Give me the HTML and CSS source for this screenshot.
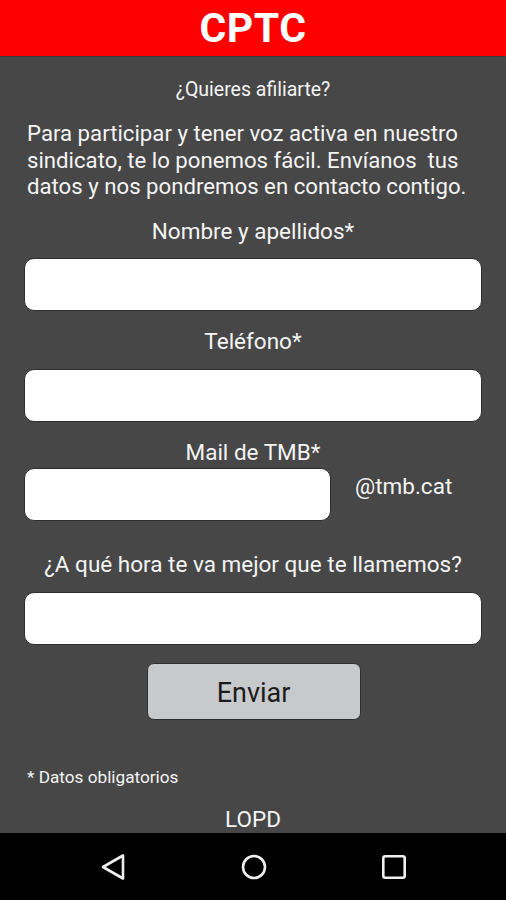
FILE: index.html
```html
<!DOCTYPE html>
<html lang="es">
<head>
<meta charset="utf-8">
<title>CPTC</title>
<link rel="stylesheet" href="styles.css">
</head>
<body>
<div class="screen">
  <header class="topbar"><h1 class="title">CPTC</h1></header>
  <main class="content">
    <p class="ask">¿Quieres afiliarte?</p>
    <p class="intro">Para participar y tener voz activa en nuestro sindicato, te lo ponemos fácil. Envíanos&nbsp; tus datos y nos pondremos en contacto contigo.</p>
    <label class="label l-name">Nombre y apellidos*</label>
    <div class="field"></div>
    <label class="label l-phone">Teléfono*</label>
    <div class="field"></div>
    <label class="label l-mail">Mail de TMB*</label>
    <div class="mail-row">
      <div class="field field-mail"></div>
      <span class="domain">@tmb.cat</span>
    </div>
    <label class="label l-hour">¿A qué hora te va mejor que te llamemos?</label>
    <div class="field"></div>
    <div class="btn-row"><button class="send">Enviar</button></div>
    <p class="note">* Datos obligatorios</p>
    <p class="lopd">LOPD</p>
  </main>
  <nav class="navbar">
    <svg class="nav-ico" width="26" height="28" viewBox="0 0 26 28"><path d="M23 2.5 L3 14 L23 25.5 Z" fill="none" stroke="#f0f0f0" stroke-width="2.6" stroke-linejoin="round"/></svg>
    <svg class="nav-ico" width="28" height="28" viewBox="0 0 28 28"><circle cx="14" cy="14" r="11" fill="none" stroke="#f0f0f0" stroke-width="2.6"/></svg>
    <svg class="nav-ico" width="26" height="26" viewBox="0 0 26 26"><rect x="2.3" y="2.3" width="21.4" height="21.4" rx="2" fill="none" stroke="#f0f0f0" stroke-width="2.6"/></svg>
  </nav>
</div>
</body>
</html>
```

FILE: styles.css
```css
* { box-sizing: border-box; }
html, body { margin: 0; padding: 0; }
body {
  background: #474747;
  font-family: Roboto, "Noto Sans", "Liberation Sans", sans-serif;
  color: #f4f4f4;
}
.screen {
  display: flex;
  flex-direction: column;
  height: 900px;
}
.topbar {
  height: 57px;
  background: #ff0000;
  border-bottom: 1px solid #3a3a3a;
  display: flex;
  justify-content: center;
  align-items: center;
}
.title {
  margin: 0;
  color: #ffffff;
  font-size: 41px;
  font-weight: 700;
  line-height: 48px;
  letter-spacing: 0.5px;
}
.content {
  flex: 1;
  display: flex;
  flex-direction: column;
  padding: 0 24px;
}
.ask {
  margin: 23px 0 0;
  font-size: 19.5px;
  line-height: 20px;
  text-align: center;
}
.intro {
  margin: 20px 0 0 3px;
  font-size: 22.2px;
  line-height: 26.5px;
}
.label {
  display: block;
  text-align: center;
  font-size: 22.5px;
  line-height: 24px;
}
.l-name { margin-top: 19px; }
.l-phone { margin-top: 18px; }
.l-mail { margin-top: 18px; }
.l-hour { margin-top: 31px; }
.field {
  height: 53px;
  background: #ffffff;
  border: 1px solid #2e2e2e;
  border-radius: 10px;
  margin-top: 15px;
}
.l-phone + .field, .l-hour + .field { margin-top: 16px; }
.mail-row {
  display: flex;
  align-items: center;
  margin-top: 4px;
}
.field-mail {
  margin-top: 0;
  width: 307px;
  height: 53px;
}
.domain {
  margin-left: 24px;
  margin-top: -16px;
  font-size: 22.5px;
}
.btn-row {
  display: flex;
  justify-content: center;
  margin-top: 18px;
}
.send {
  width: 214px;
  height: 57px;
  background: #c8c9ca;
  border: 1px solid #2e2e2e;
  border-radius: 7px;
  font-family: Roboto, "Noto Sans", "Liberation Sans", sans-serif;
  font-size: 27px;
  color: #1c1c1c;
  padding: 4px 0 0;
  margin-left: 1px;
}
.note {
  margin: 48px 0 0 3px;
  font-size: 17.2px;
  line-height: 18px;
}
.lopd {
  margin: 23px 0 0;
  font-size: 22.5px;
  line-height: 20px;
  text-align: center;
}
.navbar {
  height: 67px;
  background: #000000;
  display: flex;
  align-items: center;
  justify-content: space-between;
  padding: 0 99px 0 100px;
}
.nav-ico { display: block; }
```
